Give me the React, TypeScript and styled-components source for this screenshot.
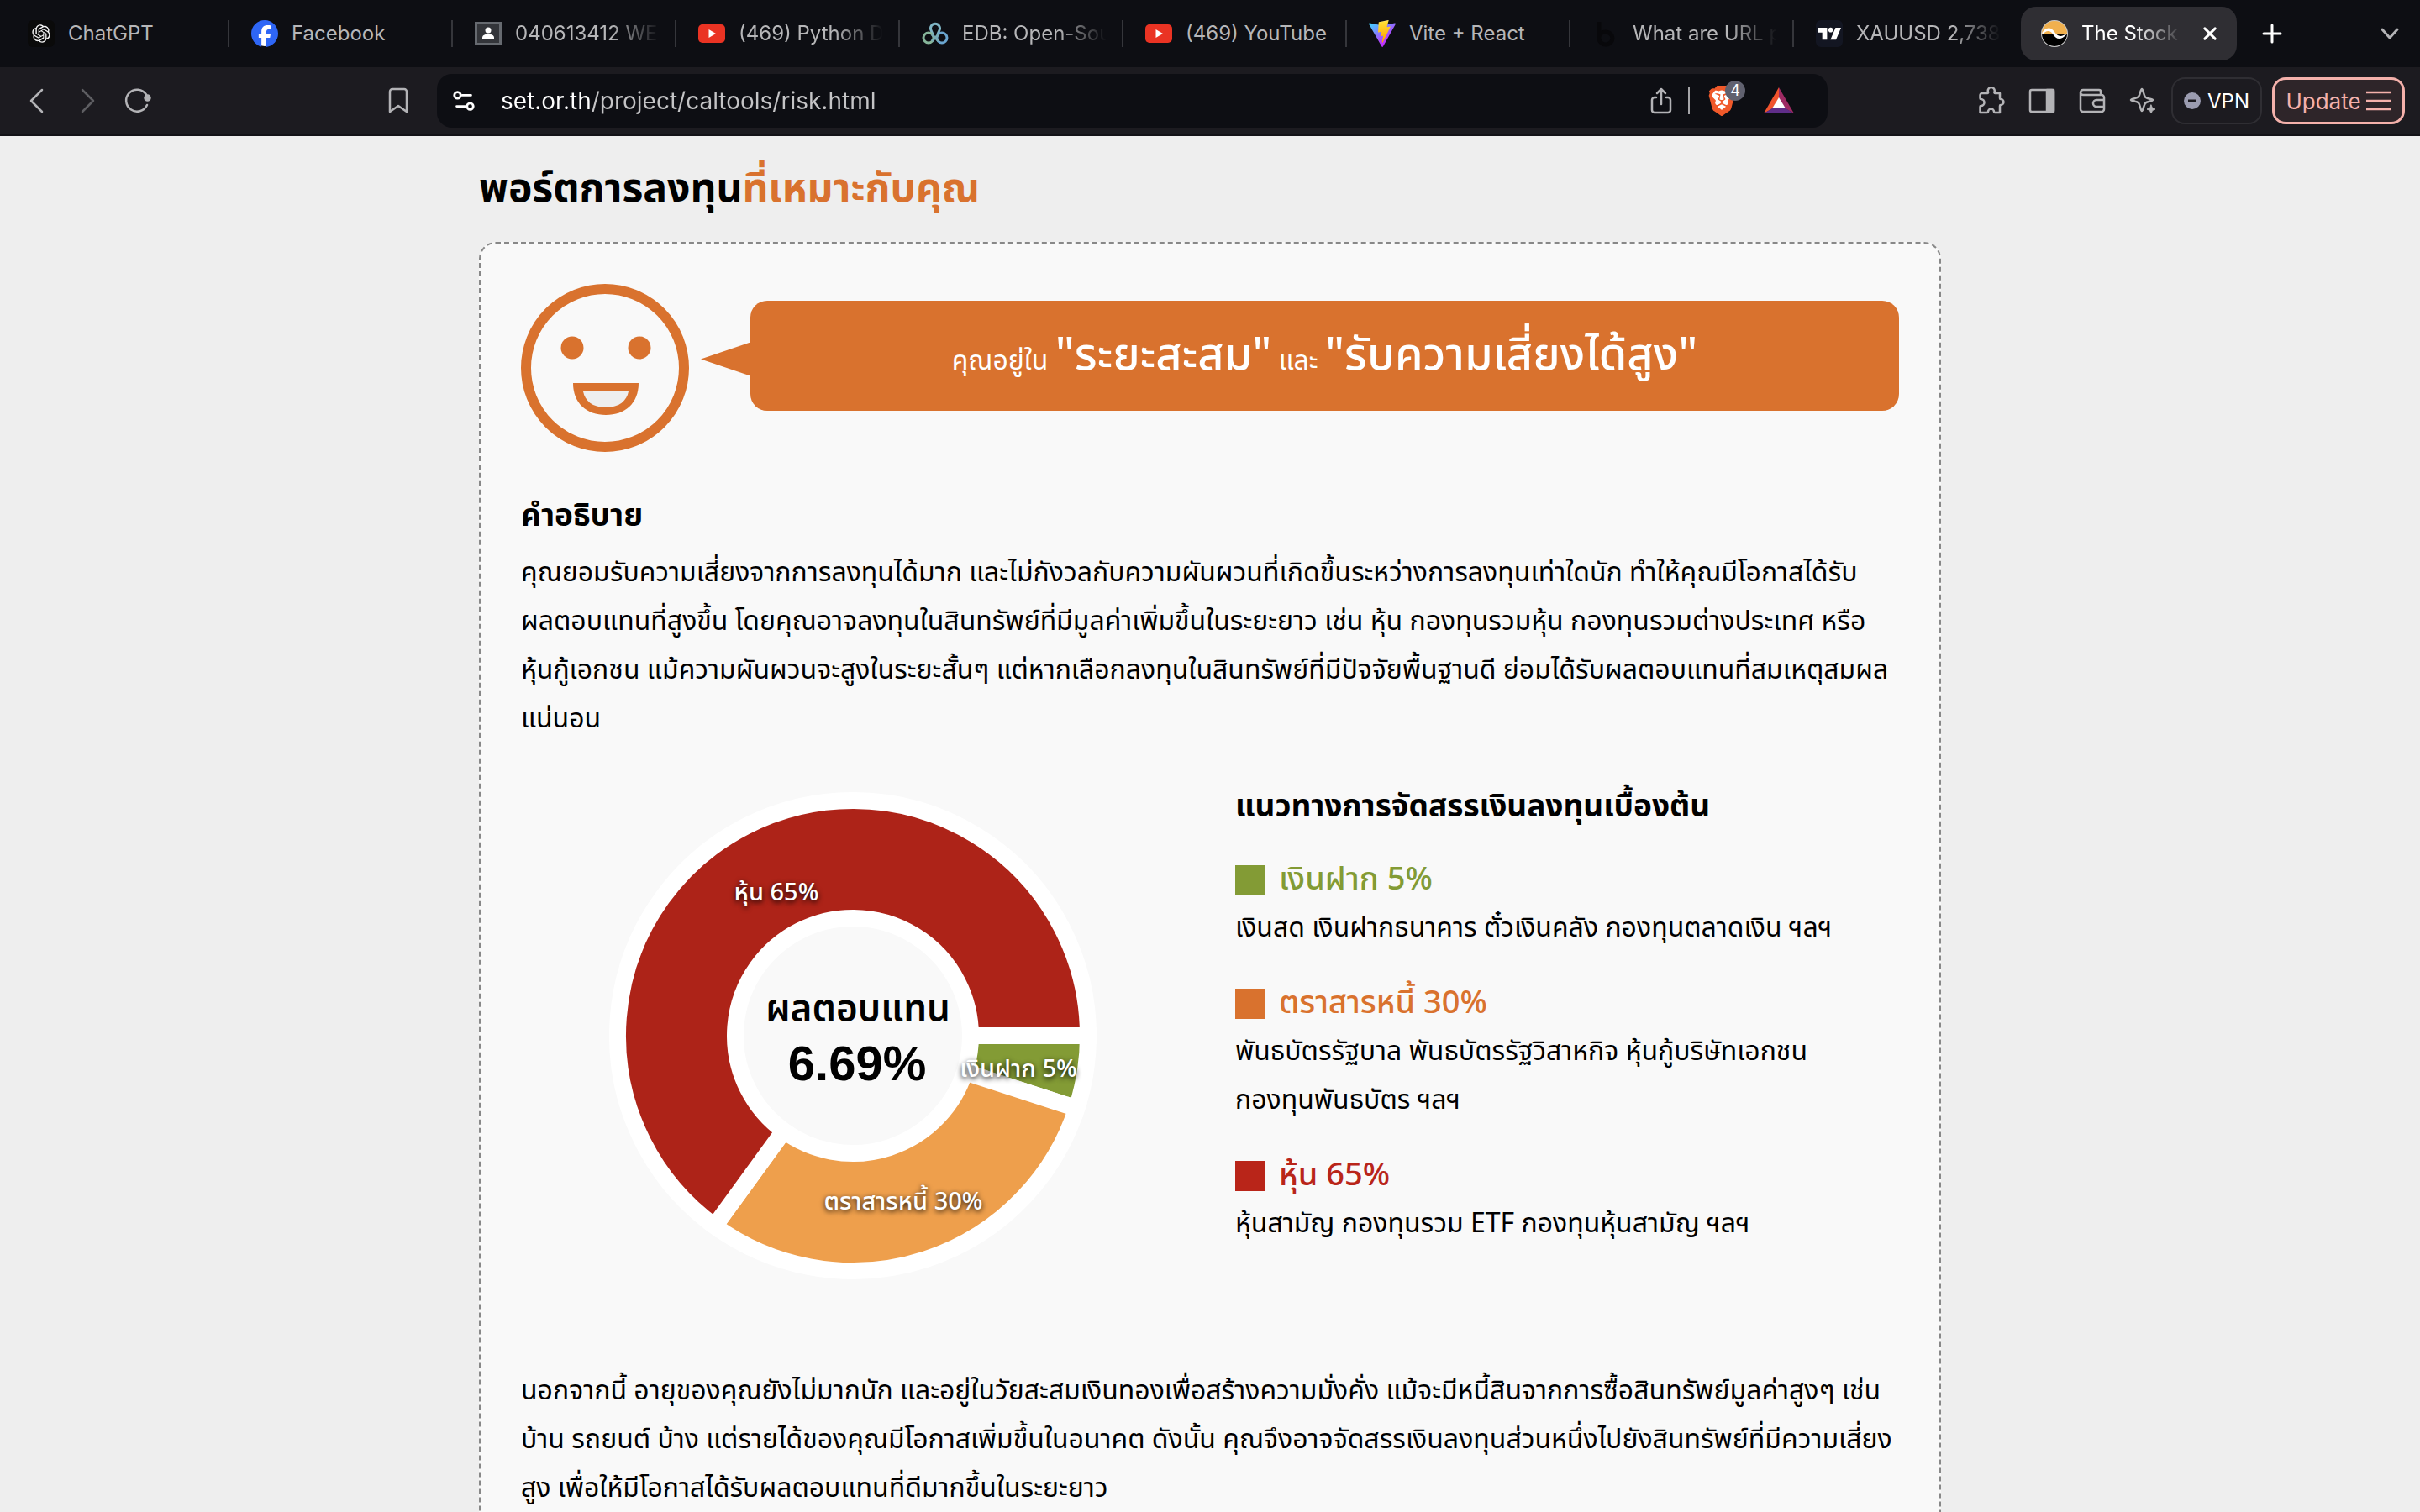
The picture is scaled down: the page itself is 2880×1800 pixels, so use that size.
import React from 'react';
import styled, { createGlobalStyle } from 'styled-components';
import { RiOpenaiFill } from 'react-icons/ri';
import { SiBrave, SiFacebook, SiTradingview } from 'react-icons/si';

const orange = '#d9722e';
const thai = '"Noto Sans Thai", "Noto Sans Thai UI", "Loma", "Noto Sans", "Liberation Sans", sans-serif';
const latin = 'Inter, "Liberation Sans", sans-serif';

const Global = createGlobalStyle`
  *, *::before, *::after { box-sizing: border-box; }
  body { margin: 0; background: #eeeeee; font-family: ${thai}; color: #000; }
  button, input { font: inherit; }
`;

/* ---------- browser window ---------- */

const Window = styled.div`
  height: 100vh;
  display: flex;
  flex-direction: column;
  overflow: hidden;
`;

const TabStrip = styled.nav`
  flex: none;
  height: 80px;
  display: flex;
  align-items: center;
  padding-left: 7px;
  background: #0d0e13;
  font-family: ${latin};
`;

const Tab = styled.a<{ $active?: boolean }>`
  flex: 0 1 ${p => (p.$active ? 257 : 266)}px;
  min-width: 0;
  height: ${p => (p.$active ? 64 : 32)}px;
  margin-left: ${p => (p.$active ? 4 : 0)}px;
  padding: 0 ${p => (p.$active ? 18 : 16)}px 0 ${p => (p.$active ? 24 : 26)}px;
  display: flex;
  align-items: center;
  gap: 16px;
  border-right: ${p => (p.$active ? 0 : 2)}px solid #35363b;
  border-radius: ${p => (p.$active ? 18 : 0)}px;
  background: ${p => (p.$active ? '#2f2e33' : 'transparent')};
  color: ${p => (p.$active ? '#ffffff' : '#b6b6b8')};
  text-decoration: none;
  &:nth-last-of-type(2) { border-color: transparent; }
  > svg { flex: none; }
`;

const TabTitle = styled.span<{ $fade?: boolean }>`
  flex: 1;
  min-width: 0;
  overflow: hidden;
  white-space: nowrap;
  font-size: 24px;
  line-height: 32px;
  mask-image: ${p => (p.$fade ? 'linear-gradient(to right, #000 calc(100% - 60px), transparent calc(100% - 2px))' : 'none')};
`;

const IconButton = styled.button<{ $tone?: string }>`
  flex: none;
  width: 44px;
  height: 44px;
  padding: 0;
  border: 0;
  background: none;
  color: ${p => p.$tone ?? '#b3b3b6'};
  display: grid;
  place-items: center;
  position: relative;
`;

const CloseButton = styled(IconButton)`
  width: 28px;
`;

const NewTab = styled(IconButton)`
  margin-left: 20px;
`;

const TabList = styled(IconButton)`
  margin-left: auto;
  margin-right: 14px;
`;

const Toolbar = styled.header`
  flex: none;
  height: 82px;
  display: grid;
  grid-template-columns: 520px minmax(0, 1fr) 705px;
  align-items: center;
  background: #1c1b20;
  border-bottom: 2px solid #131217;
  font-family: ${latin};
`;

const LeftTools = styled.div`
  display: flex;
  gap: 16px;
  padding: 0 24px 0 22px;
  > :last-child { margin-left: auto; }
`;

const AddressBar = styled.form`
  height: 64px;
  display: flex;
  align-items: center;
  padding: 0 36px 0 10px;
  border-radius: 18px;
  background: #0d0e13;
`;

const AddressField = styled.input`
  flex: 1;
  min-width: 0;
  height: 48px;
  margin: 0 20px 0 22px;
  padding: 0;
  border: 0;
  outline: 0;
  font-size: 28px;
  background: linear-gradient(to right, #ffffff 109px, #c4c4c6 109px);
  background-clip: text;
  -webkit-background-clip: text;
  color: transparent;
`;

const Divider = styled.span`
  flex: none;
  width: 2px;
  height: 32px;
  margin: 0 16px 0 10px;
  background: #a5a5a8;
`;

const ShieldButton = styled(IconButton)`
  margin-right: 24px;
`;

const Badge = styled.span`
  position: absolute;
  top: -2px;
  right: -6px;
  width: 24px;
  height: 24px;
  border-radius: 12px;
  background: #60616f;
  color: #fff;
  font-size: 18px;
  line-height: 24px;
  text-align: center;
`;

const RightTools = styled.div`
  display: flex;
  align-items: center;
  justify-content: flex-end;
  gap: 12px;
  padding-right: 18px;
`;

const IconRow = styled.div`
  display: flex;
  gap: 16px;
`;

const PillButton = styled.button<{ $accent?: boolean }>`
  height: 56px;
  display: flex;
  align-items: center;
  justify-content: center;
  gap: ${p => (p.$accent ? 6 : 8)}px;
  width: ${p => (p.$accent ? 158 : 108)}px;
  padding: 0;
  border: ${p => (p.$accent ? '3px solid #f4b1ab' : '2px solid #2f2e33')};
  border-radius: 16px;
  background: ${p => (p.$accent ? '#2e2529' : 'transparent')};
  color: ${p => (p.$accent ? '#f4b1ab' : '#ffffff')};
  font-size: ${p => (p.$accent ? 26 : 24)}px;
`;

/* ---------- page ---------- */

const Page = styled.main`
  flex: 1;
  min-height: 0;
  overflow: hidden;
  background: #eeeeee;
`;

const Container = styled.div`
  max-width: 1740px;
  margin: 0 auto;
`;

const PageTitle = styled.h1`
  margin: 0;
  padding: 26px 0 24px;
  font-size: 48px;
  line-height: 76px;
  font-weight: 700;
  white-space: nowrap;
  span { color: ${orange}; }
`;

const Card = styled.section`
  padding: 48px 48px 200px;
  border: 2px dashed #888888;
  border-radius: 20px;
  background: #f9f9f9;
`;

const ResultRow = styled.div`
  display: flex;
  gap: 14px;
  align-items: flex-start;
`;

const Speech = styled.div`
  flex: 1;
  display: flex;
  align-items: center;
  margin-top: 20px;
`;

const SpeechTip = styled.span`
  flex: none;
  width: 59px;
  height: 40px;
  margin-top: 8px;
  background: ${orange};
  clip-path: polygon(0 50%, 100% 0, 100% 100%);
`;

const SpeechBox = styled.p`
  flex: 1;
  margin: 0;
  height: 131px;
  border-radius: 20px;
  background: ${orange};
  color: #fff;
  text-align: center;
  font-size: 32px;
  line-height: 131px;
  white-space: nowrap;
  strong { font-size: 54px; font-weight: 500; }
`;

const Heading = styled.h2`
  margin: 0 0 4px;
  font-size: 37px;
  line-height: 68px;
  font-weight: 700;
  white-space: nowrap;
`;

const Paragraph = styled.p`
  margin: 0;
  font-size: 32px;
  line-height: 58px;
`;

const Line = styled.span`
  display: block;
  white-space: nowrap;
`;

const Description = styled.section`
  margin-top: 43px;
`;

const Allocation = styled.section`
  display: grid;
  grid-template-columns: 850px minmax(0, 1fr);
  margin: 38px 0 94px;
`;

const ChartCell = styled.figure`
  margin: 0;
  padding: 10px 60px 0 0;
  display: flex;
  justify-content: center;
`;

const Guide = styled.div`
  padding-top: 4px;
`;

const LegendList = styled.ul`
  margin: 25px 0 0;
  padding: 0;
  list-style: none;
  display: flex;
  flex-direction: column;
  gap: 33px;
`;

const LegendTitle = styled.h3<{ $color: string }>`
  margin: 0;
  display: flex;
  align-items: center;
  gap: 16px;
  color: ${p => p.$color};
  font-size: 38px;
  line-height: 56px;
  font-weight: 500;
  white-space: nowrap;
  &::before {
    content: '';
    width: 36px;
    height: 36px;
    background: ${p => p.$color};
  }
`;

/* ---------- drawings ---------- */

const YouTube = () => (
  <svg width="32" height="32" viewBox="0 0 32 32" aria-hidden="true">
    <rect y="5" width="32" height="22" rx="5" fill="#ea3323" />
    <path d="M12.500 11v10l8.500-5z" fill="#fff" />
  </svg>
);

const OpenAiMark = () => (
  <svg width="32" height="32" viewBox="0 0 32 32" aria-hidden="true">
    <rect width="32" height="32" rx="6" fill="#0a0a0a" />
    <RiOpenaiFill x="3" y="3" size={26} color="#f2f2f2" />
  </svg>
);

const FacebookMark = () => (
  <svg width="32" height="32" viewBox="0 0 32 32" aria-hidden="true">
    <circle cx="16" cy="16" r="15" fill="#fff" />
    <SiFacebook size={32} color="#2e66f6" />
  </svg>
);

const Contact = () => (
  <svg width="32" height="32" viewBox="0 0 32 32" aria-hidden="true">
    <rect x="1.500" y="3.500" width="29" height="25" fill="#33353a" stroke="#666a70" strokeWidth="3" />
    <circle cx="16" cy="12" r="3.500" fill="#fff" />
    <path d="M9 23v-2c0-3 3-4.500 7-4.500s7 1.500 7 4.500v2z" fill="#fff" />
  </svg>
);

const EdbMark = () => (
  <svg width="32" height="32" viewBox="0 0 32 32" fill="none" strokeWidth="3" aria-hidden="true">
    <path d="M13 16.500L11 12a5.500 5.500 0 1 1 10 0l-2 4.500" stroke="#7fb5c4" />
    <circle cx="8" cy="21" r="6" stroke="#86b59a" />
    <circle cx="24" cy="21" r="6" stroke="#6aa5cf" />
    <path d="M12 17l8 8M20 17l-8 8" stroke="#79acb5" />
  </svg>
);

const ViteMark = () => (
  <svg width="32" height="32" viewBox="0 0 256 257" aria-hidden="true">
    <defs>
      <linearGradient id="viteBody" x1="-.8%" x2="57.600%" y1="7.600%" y2="78.400%">
        <stop offset="0%" stopColor="#41d1ff" />
        <stop offset="100%" stopColor="#bd34fe" />
      </linearGradient>
      <linearGradient id="viteBolt" x1="43.400%" x2="50.300%" y1="2.200%" y2="89%">
        <stop offset="0%" stopColor="#ffea83" />
        <stop offset="8.300%" stopColor="#ffdd35" />
        <stop offset="100%" stopColor="#ffa800" />
      </linearGradient>
    </defs>
    <path fill="url(#viteBody)" d="M255.153 37.938L134.897 252.976c-2.483 4.440-8.862 4.466-11.382.048L.875 37.958c-2.746-4.814 1.371-10.646 6.827-9.670l120.385 21.517a6.537 6.537 0 0 0 2.322-.004l117.867-21.483c5.438-.991 9.574 4.796 6.877 9.620Z" />
    <path fill="url(#viteBolt)" d="M185.432.063L96.440 17.501a3.268 3.268 0 0 0-2.634 3.014l-5.474 92.456a3.268 3.268 0 0 0 3.997 3.378l24.777-5.718c2.318-.535 4.413 1.507 3.936 3.838l-7.361 36.047c-.495 2.426 1.782 4.500 4.151 3.780l15.304-4.649c2.372-.720 4.652 1.360 4.150 3.788l-11.698 56.621c-.732 3.542 3.979 5.473 5.943 2.437l1.313-2.028l72.516-144.720c1.215-2.423-.880-5.186-3.540-4.672l-25.505 4.922c-2.396.462-4.435-1.770-3.759-4.114l16.646-57.705c.677-2.350-1.370-4.583-3.769-4.113Z" />
  </svg>
);

const BMark = () => (
  <svg width="32" height="32" viewBox="0 0 32 32" aria-hidden="true">
    <path d="M8 2v20a8 7.500 0 1 0 8-8c-4 0-8 2-8 6" fill="none" stroke="#08080b" strokeWidth="5" />
  </svg>
);

const TradingMark = () => (
  <svg width="32" height="32" viewBox="0 0 32 32" aria-hidden="true">
    <rect width="32" height="32" rx="6" fill="#131622" />
    <SiTradingview x="2" y="2" size={28} color="#fff" />
  </svg>
);

const SetMark = () => (
  <svg width="32" height="32" viewBox="0 0 32 32" aria-hidden="true">
    <circle cx="16" cy="16" r="16" fill="#c9c9c9" />
    <path d="M1 16a15 15 0 0 1 30 0z" fill="#f0b04e" />
    <path d="M1 16a15 15 0 0 0 30 0z" fill="#000" />
    <path d="M1 15.500c2-4 5-6 8-6 6 0 8 8 12 9 3 1 6 0 9.500-3v1c-3 4-6 5.500-9 5.500-6 0-7-8-12-9-3-.5-5 1-7 3z" fill="#fff" />
  </svg>
);

const strokeProps = { fill: 'none', stroke: 'currentColor', strokeLinecap: 'round', strokeLinejoin: 'round' } as const;

const Glyph = ({ d, size = 32, weight = 2.5, children }: { d?: string; size?: number; weight?: number; children?: React.ReactNode }) => (
  <svg width={size} height={size} viewBox="0 0 32 32" {...strokeProps} strokeWidth={weight} aria-hidden="true">
    {d && <path d={d} />}
    {children}
  </svg>
);

const BatMark = () => (
  <svg width="36" height="32" viewBox="0 0 36 32" aria-hidden="true">
    <path d="M18 0L0 31l10-5.500 8-13z" fill="#f0532d" />
    <path d="M18 0l18 31-10-5.500-8-13z" fill="#9e2a63" />
    <path d="M0 31h36l-10-6H10z" fill="#5f2d89" />
    <path d="M18 12l8 13H10z" fill="#fff" />
  </svg>
);

const Face = () => (
  <svg width="200" height="200" viewBox="0 0 200 200" role="img" aria-label="smile">
    <circle cx="100" cy="100" r="94" fill="none" stroke={orange} strokeWidth="12" />
    <circle cx="61" cy="76" r="13.500" fill={orange} />
    <circle cx="141" cy="76" r="13.500" fill={orange} />
    <path d="M62 118h78c0 24-16 38-39 38s-39-14-39-38z" fill={orange} />
    <path d="M74 128h54c-2 11-11 19-27 19s-25-8-27-19z" fill="#eeeeee" />
  </svg>
);

/* ---------- chart ---------- */

const slices = [
  { label: 'เงินฝาก 5%', value: 5, color: '#839b35', x: 497, y: 349 },
  { label: 'ตราสารหนี้ 30%', value: 30, color: '#ee9f4c', x: 360, y: 507 },
  { label: 'หุ้น 65%', value: 65, color: '#ad2318', x: 209, y: 139 },
];

const SliceLabel = styled.text`
  font-size: 29px;
  font-weight: 500;
  fill: #fff;
  text-anchor: middle;
  text-shadow: 0 2px 6px #000;
`;

const CenterText = styled.text<{ $size: number }>`
  font-family: ${p => (p.$size > 50 ? '"Liberation Sans", sans-serif' : thai)};
  font-size: ${p => p.$size}px;
  font-weight: ${p => (p.$size > 50 ? 700 : 600)};
  text-anchor: middle;
`;

const wedge = (from: number, to: number) => {
  const at = (r: number, t: number) =>
    `${300 + r * Math.cos(t * 2 * Math.PI)} ${300 + r * Math.sin(t * 2 * Math.PI)}`;
  const large = to - from > 0.5 ? 1 : 0;
  return `M${at(280, from)}A280 280 0 ${large} 1 ${at(280, to)}L${at(140, to)}A140 140 0 ${large} 0 ${at(140, from)}Z`;
};

const Donut = () => {
  let total = 0;
  const arcs = slices.map(s => {
    const from = total / 100;
    total += s.value;
    return { ...s, d: wedge(from, total / 100) };
  });
  return (
    <svg width="600" height="600" viewBox="0 0 600 600" role="img" aria-label="ผลตอบแทน 6.69%">
      {arcs.map(a => (
        <path key={a.label} d={a.d} fill={a.color} stroke="#fff" strokeWidth="20" />
      ))}
      {arcs.map(a => (
        <SliceLabel key={a.label} x={a.x} y={a.y}>{a.label}</SliceLabel>
      ))}
      <CenterText $size={44} x="306" y="282">ผลตอบแทน</CenterText>
      <CenterText $size={58} x="305" y="353">6.69%</CenterText>
    </svg>
  );
};

/* ---------- content ---------- */

const tabs = [
  { title: 'ChatGPT', icon: <OpenAiMark /> },
  { title: 'Facebook', icon: <FacebookMark /> },
  { title: '040613412 WE', icon: <Contact />, fade: true },
  { title: '(469) Python D', icon: <YouTube />, fade: true },
  { title: 'EDB: Open-Sou', icon: <EdbMark />, fade: true },
  { title: '(469) YouTube', icon: <YouTube /> },
  { title: 'Vite + React', icon: <ViteMark /> },
  { title: 'What are URL p', icon: <BMark />, fade: true },
  { title: 'XAUUSD 2,738', icon: <TradingMark />, fade: true },
];

const legend = [
  { title: 'เงินฝาก 5%', color: '#839b35', lines: ['เงินสด เงินฝากธนาคาร ตั๋วเงินคลัง กองทุนตลาดเงิน ฯลฯ'] },
  {
    title: 'ตราสารหนี้ 30%',
    color: orange,
    lines: ['พันธบัตรรัฐบาล พันธบัตรรัฐวิสาหกิจ หุ้นกู้บริษัทเอกชน', 'กองทุนพันธบัตร ฯลฯ'],
  },
  { title: 'หุ้น 65%', color: '#b92519', lines: ['หุ้นสามัญ กองทุนรวม ETF กองทุนหุ้นสามัญ ฯลฯ'] },
];

const description = [
  'คุณยอมรับความเสี่ยงจากการลงทุนได้มาก และไม่กังวลกับความผันผวนที่เกิดขึ้นระหว่างการลงทุนเท่าใดนัก ทำให้คุณมีโอกาสได้รับ',
  'ผลตอบแทนที่สูงขึ้น โดยคุณอาจลงทุนในสินทรัพย์ที่มีมูลค่าเพิ่มขึ้นในระยะยาว เช่น หุ้น กองทุนรวมหุ้น กองทุนรวมต่างประเทศ หรือ',
  'หุ้นกู้เอกชน แม้ความผันผวนจะสูงในระยะสั้นๆ แต่หากเลือกลงทุนในสินทรัพย์ที่มีปัจจัยพื้นฐานดี ย่อมได้รับผลตอบแทนที่สมเหตุสมผล',
  'แน่นอน',
];

const advice = [
  'นอกจากนี้ อายุของคุณยังไม่มากนัก และอยู่ในวัยสะสมเงินทองเพื่อสร้างความมั่งคั่ง แม้จะมีหนี้สินจากการซื้อสินทรัพย์มูลค่าสูงๆ เช่น',
  'บ้าน รถยนต์ บ้าง แต่รายได้ของคุณมีโอกาสเพิ่มขึ้นในอนาคต ดังนั้น คุณจึงอาจจัดสรรเงินลงทุนส่วนหนึ่งไปยังสินทรัพย์ที่มีความเสี่ยง',
  'สูง เพื่อให้มีโอกาสได้รับผลตอบแทนที่ดีมากขึ้นในระยะยาว',
];

const Lines = ({ lines }: { lines: string[] }) => (
  <Paragraph>
    {lines.map(l => <Line key={l}>{l}</Line>)}
  </Paragraph>
);

export default function App() {
  return (
    <Window>
      <Global />
      <TabStrip>
        {tabs.map((t, i) => (
          <Tab key={i} href="#">
            {t.icon}
            <TabTitle $fade={t.fade}>{t.title}</TabTitle>
          </Tab>
        ))}
        <Tab $active href="#">
          <SetMark />
          <TabTitle $fade>The Stock</TabTitle>
          <CloseButton as="span" $tone="#ffffff"><Glyph size={28} weight={3.5} d="M9 9l14 14M23 9L9 23" /></CloseButton>
        </Tab>
        <NewTab $tone="#ffffff" aria-label="New tab"><Glyph weight={3} d="M16 6v20M6 16h20" /></NewTab>
        <TabList aria-label="Tab list"><Glyph weight={3} d="M7 11l9 10 9-10" /></TabList>
      </TabStrip>

      <Toolbar>
        <LeftTools>
          <IconButton aria-label="Back"><Glyph d="M22 3L9 16l13 13" /></IconButton>
          <IconButton aria-label="Forward" $tone="#5e5e62"><Glyph d="M10 3l13 13-13 13" /></IconButton>
          <IconButton aria-label="Reload">
            <Glyph d="M27 21a13 13 0 1 1-1-12.500">
              <circle cx="27.500" cy="12.500" r="3" fill="currentColor" />
            </Glyph>
          </IconButton>
          <IconButton aria-label="Bookmark"><Glyph d="M6 5a3 3 0 0 1 3-3h14a3 3 0 0 1 3 3v24l-10-7-10 7z" /></IconButton>
        </LeftTools>

        <AddressBar>
          <IconButton type="button" aria-label="Site settings" $tone="#ffffff">
            <Glyph size={30} weight={3}>
              <circle cx="8" cy="9" r="4" />
              <path d="M14 9h11M7 23h11" />
              <circle cx="24" cy="23" r="4" />
            </Glyph>
          </IconButton>
          <AddressField aria-label="Address" defaultValue="set.or.th/project/caltools/risk.html" />
          <IconButton type="button" aria-label="Share">
            <Glyph d="M10 12H8a3 3 0 0 0-3 3v12a3 3 0 0 0 3 3h16a3 3 0 0 0 3-3V15a3 3 0 0 0-3-3h-2M16 20V2M11 7l5-5 5 5" />
          </IconButton>
          <Divider />
          <ShieldButton type="button" aria-label="Shields">
            <svg width="32" height="36" viewBox="0 0 32 36" aria-hidden="true">
              <path d="M8 4h16l4 6-3 17-9 7-9-7-3-17z" fill="#fff" />
              <SiBrave x="-2" y="0" size={36} color="#f0592a" />
            </svg>
            <Badge>4</Badge>
          </ShieldButton>
          <IconButton type="button" aria-label="Rewards"><BatMark /></IconButton>
        </AddressBar>

        <RightTools>
          <IconRow>
            <IconButton aria-label="Extensions">
              <Glyph d="M5 7h6a1 1 0 0 0 1-1.500 4 4 0 1 1 7.500 0A1 1 0 0 0 20.500 7H26v6a1 1 0 0 0 1 1 3.500 3.500 0 1 1 0 7 1 1 0 0 0-1 1v8h-6a1 1 0 0 1-1-1 3.500 3.500 0 0 0-7 0 1 1 0 0 1-1 1H2.500v-7a1 1 0 0 1 1-1 4 4 0 0 0 0-8 1 1 0 0 1-1-1V9.500A2.500 2.500 0 0 1 5 7z" />
            </IconButton>
            <IconButton aria-label="Sidebar">
              <Glyph>
                <rect x="2" y="3" width="28" height="26" rx="2" />
                <rect x="22" y="3" width="8" height="26" fill="currentColor" />
              </Glyph>
            </IconButton>
            <IconButton aria-label="Wallet">
              <Glyph d="M26 9V5a2 2 0 0 0-2-2H5a3 3 0 0 0 0 6h22a3 3 0 0 1 3 3v14a3 3 0 0 1-3 3H5a3 3 0 0 1-3-3V6M30 15h-9a4 4 0 0 0 0 8h9" />
            </IconButton>
            <IconButton aria-label="Assistant">
              <Glyph>
                <path d="M15 2c1.500 0 2 7 4 9.500S28 13.500 28 15s-7 1.500-9 4-2.500 9-4 9-2-7-4-9.500S2 16.500 2 15s7-1.500 9-4S13.500 2 15 2z" />
                <path d="M26 21l1.500 3.500L31 26l-3.500 1.500L26 31l-1.500-3.500L21 26l3.500-1.500z" fill="currentColor" strokeWidth="1" />
              </Glyph>
            </IconButton>
          </IconRow>
          <PillButton>
            <svg width="20" height="20" viewBox="0 0 20 20" aria-hidden="true">
              <circle cx="10" cy="10" r="10" fill="#9b9cb0" />
              <path d="M5 10h10" stroke="#1c1b20" strokeWidth="3" />
            </svg>
            VPN
          </PillButton>
          <PillButton $accent>
            Update
            <svg width="30" height="24" viewBox="0 0 30 24" stroke="currentColor" strokeWidth="2.500" aria-hidden="true">
              <path d="M0 2h30M0 12h30M0 22h30" />
            </svg>
          </PillButton>
        </RightTools>
      </Toolbar>

      <Page>
        <Container>
          <PageTitle>พอร์ตการลงทุน<span>ที่เหมาะกับคุณ</span></PageTitle>
          <Card>
            <ResultRow>
              <Face />
              <Speech>
                <SpeechTip />
                <SpeechBox>
                  คุณอยู่ใน <strong>"ระยะสะสม"</strong> และ <strong>"รับความเสี่ยงได้สูง"</strong>
                </SpeechBox>
              </Speech>
            </ResultRow>

            <Description>
              <Heading>คำอธิบาย</Heading>
              <Lines lines={description} />
            </Description>

            <Allocation>
              <ChartCell><Donut /></ChartCell>
              <Guide>
                <Heading>แนวทางการจัดสรรเงินลงทุนเบื้องต้น</Heading>
                <LegendList>
                  {legend.map(item => (
                    <li key={item.title}>
                      <LegendTitle $color={item.color}>{item.title}</LegendTitle>
                      <Lines lines={item.lines} />
                    </li>
                  ))}
                </LegendList>
              </Guide>
            </Allocation>

            <Lines lines={advice} />
          </Card>
        </Container>
      </Page>
    </Window>
  );
}
